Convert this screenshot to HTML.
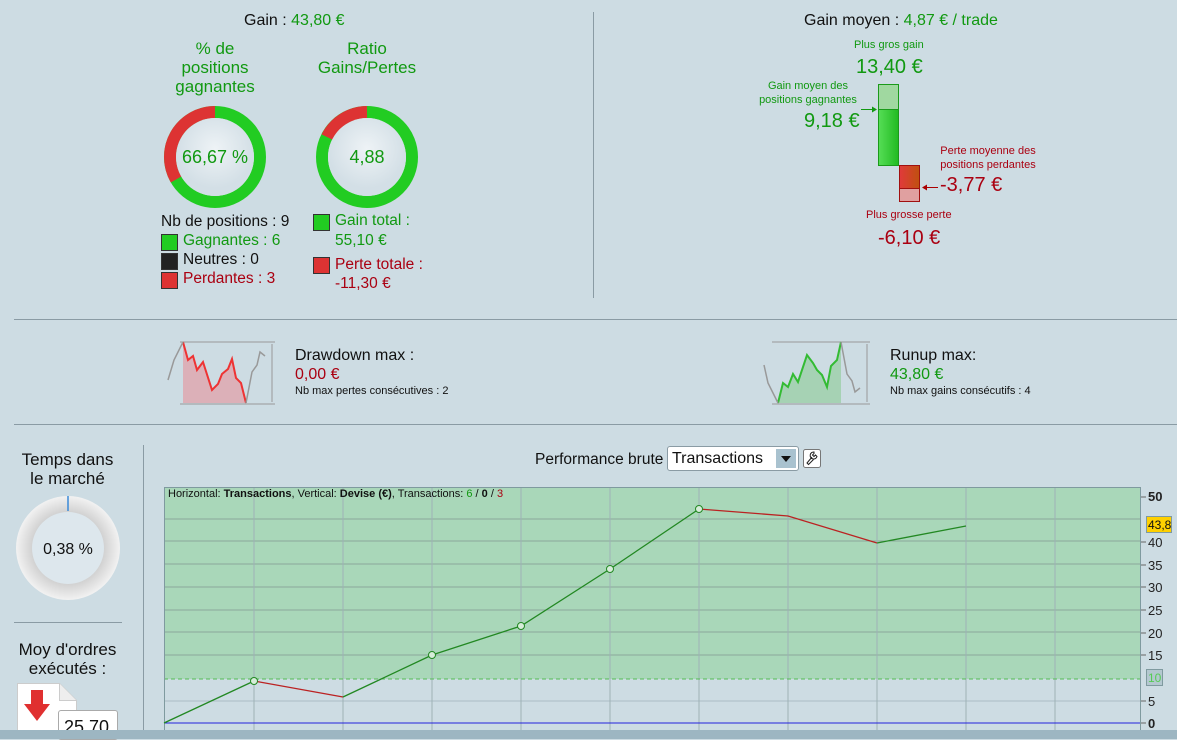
<!DOCTYPE html>
<html><head><meta charset="utf-8"><style>
body{margin:0;width:1177px;height:739px;background:#cddce3;font-family:"Liberation Sans",sans-serif;position:relative;overflow:hidden;color:#111}
.a{position:absolute;white-space:nowrap}
.g{color:#119911}.r{color:#aa0011}
.c{text-align:center}
.sq{position:absolute;width:15px;height:15px;border:1px solid #333}
</style></head><body>
<div class="a" style="left:593px;top:12px;width:1px;height:286px;background:#8a9ba4"></div>
<div class="a" style="left:14px;top:319px;width:1163px;height:1px;background:#8a9ba4"></div>
<div class="a" style="left:14px;top:424px;width:1163px;height:1px;background:#8a9ba4"></div>
<div class="a" style="left:143px;top:445px;width:1px;height:290px;background:#8a9ba4"></div>
<div class="a" style="left:14px;top:622px;width:108px;height:1px;background:#8a9ba4"></div>

<div class="a" style="left:244px;top:12px;font-size:16px">Gain : <span class="g">43,80 €</span></div>
<div class="a c g" style="left:150px;top:39px;width:130px;font-size:17px;line-height:19px">% de<br>positions<br>gagnantes</div>
<div class="a c g" style="left:298px;top:39px;width:138px;font-size:17px;line-height:19px">Ratio<br>Gains/Pertes</div>

<svg class="a" style="left:160px;top:102px" width="110" height="110">
<defs><radialGradient id="in" cx="50%" cy="40%"><stop offset="0" stop-color="#eef3f6"/><stop offset="1" stop-color="#d3dfe6"/></radialGradient></defs>
<circle cx="55" cy="55" r="45" fill="none" stroke="#22cc22" stroke-width="12"/>
<path d="M55 10 A45 45 0 0 0 16 77.5" fill="none" stroke="#dd3333" stroke-width="12"/>
<circle cx="55" cy="55" r="39" fill="url(#in)"/>
<text x="55" y="61" text-anchor="middle" font-size="18" fill="#119911" font-family="Liberation Sans">66,67 %</text>
</svg>
<svg class="a" style="left:312px;top:102px" width="110" height="110">
<circle cx="55" cy="55" r="45" fill="none" stroke="#22cc22" stroke-width="12"/>
<path d="M55 10 A45 45 0 0 0 15 35" fill="none" stroke="#dd3333" stroke-width="12"/>
<circle cx="55" cy="55" r="39" fill="url(#in)"/>
<text x="55" y="61" text-anchor="middle" font-size="18" fill="#119911" font-family="Liberation Sans">4,88</text>
</svg>

<div class="a" style="left:161px;top:213px;font-size:15.5px">Nb de positions : 9</div>
<div class="sq" style="left:161px;top:234px;background:#2c2"></div><div class="a g" style="left:183px;top:232px;font-size:15.5px">Gagnantes : 6</div>
<div class="sq" style="left:161px;top:253px;background:#222"></div><div class="a" style="left:183px;top:251px;font-size:15.5px">Neutres : 0</div>
<div class="sq" style="left:161px;top:272px;background:#d33"></div><div class="a r" style="left:183px;top:270px;font-size:15.5px">Perdantes : 3</div>
<div class="sq" style="left:313px;top:214px;background:#2c2"></div><div class="a g" style="left:335px;top:212px;font-size:15.5px">Gain total :</div>
<div class="a g" style="left:335px;top:232px;font-size:15.5px">55,10 €</div>
<div class="sq" style="left:313px;top:257px;background:#d33"></div><div class="a r" style="left:335px;top:256px;font-size:15.5px">Perte totale :</div>
<div class="a r" style="left:335px;top:275px;font-size:15.5px">-11,30 €</div>

<div class="a" style="left:804px;top:12px;font-size:16px">Gain moyen : <span class="g">4,87 € / trade</span></div>
<div class="a g" style="left:854px;top:39px;font-size:11px">Plus gros gain</div>
<div class="a g" style="left:856px;top:56px;font-size:20px">13,40 €</div>
<div class="a g c" style="left:755px;top:79px;width:106px;font-size:11px;line-height:14px">Gain moyen des<br>positions gagnantes</div>
<div class="a g" style="left:804px;top:110px;font-size:20px">9,18 €</div>
<svg class="a" style="left:860px;top:105px" width="20" height="10"><path d="M1 4.5h15" stroke="#119911"/><path d="M12 1.5l5 3-5 3z" fill="#119911"/></svg>
<div class="a" style="left:878px;top:84px;width:19px;height:24px;background:#a0d8a0;border:1px solid #1a9a1a"></div>
<div class="a" style="left:878px;top:109px;width:19px;height:55px;background:linear-gradient(90deg,#55dd55,#22bb22);border:1px solid #1a9a1a"></div>
<div class="a" style="left:899px;top:165px;width:19px;height:22px;background:linear-gradient(90deg,#e03a3a,#c05010);border:1px solid #a01010"></div>
<div class="a" style="left:899px;top:188px;width:19px;height:12px;background:#e0a0a0;border:1px solid #a01010"></div>
<svg class="a" style="left:919px;top:183px" width="20" height="10"><path d="M4 4.5h15" stroke="#a00"/><path d="M8 1.5l-5 3 5 3z" fill="#a00"/></svg>
<div class="a r c" style="left:940px;top:144px;width:96px;font-size:11px;line-height:14px">Perte moyenne des<br>positions perdantes</div>
<div class="a r" style="left:940px;top:174px;font-size:20px">-3,77 €</div>
<div class="a r" style="left:866px;top:209px;font-size:11px">Plus grosse perte</div>
<div class="a r" style="left:878px;top:227px;font-size:20px">-6,10 €</div>

<svg class="a" style="left:160px;top:330px" width="120" height="85">
<line x1="20" y1="12" x2="115" y2="12" stroke="#999"/><line x1="20" y1="74" x2="115" y2="74" stroke="#999"/>
<line x1="112" y1="14" x2="112" y2="72" stroke="#999"/>
<path d="M23 12 L28 30 L33 26 L37 40 L43 32 L52 60 L58 54 L62 44 L68 39 L72 29 L76 48 L81 53 L86 73 L23 73Z" fill="#dcb0b8"/>
<polyline points="23,12 28,30 33,26 37,40 43,32 52,60 58,54 62,44 68,39 72,29 76,48 81,53 86,73" fill="none" stroke="#e33" stroke-width="2"/>
<polyline points="8,50 14,30 23,12" fill="none" stroke="#999" stroke-width="1.5"/>
<polyline points="86,73 92,42 97,35 100,22 105,26" fill="none" stroke="#999" stroke-width="1.5"/>
</svg>
<div class="a" style="left:295px;top:347px;font-size:16px">Drawdown max :</div>
<div class="a r" style="left:295px;top:366px;font-size:16px">0,00 €</div>
<div class="a" style="left:295px;top:385px;font-size:11px">Nb max pertes consécutives : 2</div>

<svg class="a" style="left:760px;top:330px" width="120" height="85">
<line x1="12" y1="12" x2="110" y2="12" stroke="#999"/><line x1="12" y1="74" x2="110" y2="74" stroke="#999"/>
<line x1="107" y1="14" x2="107" y2="72" stroke="#999"/>
<path d="M18 73 L23 53 L28 57 L33 44 L38 52 L47 25 L53 33 L57 40 L62 45 L67 57 L71 36 L77 30 L81 12 L81 73Z" fill="#a6d2b4"/>
<polyline points="18,73 23,53 28,57 33,44 38,52 47,25 53,33 57,40 62,45 67,57 71,36 77,30 81,12" fill="none" stroke="#3b3" stroke-width="2"/>
<polyline points="4,35 8,53 18,73" fill="none" stroke="#999" stroke-width="1.5"/>
<polyline points="81,12 87,44 92,51 95,62 100,58" fill="none" stroke="#999" stroke-width="1.5"/>
</svg>
<div class="a" style="left:890px;top:347px;font-size:16px">Runup max:</div>
<div class="a g" style="left:890px;top:366px;font-size:16px">43,80 €</div>
<div class="a" style="left:890px;top:385px;font-size:11px">Nb max gains consécutifs : 4</div>

<div class="a c" style="left:8px;top:450px;width:119px;font-size:17px;line-height:19px">Temps dans<br>le marché</div>
<svg class="a" style="left:15px;top:495px" width="106" height="106">
<defs><radialGradient id="gr" cx="50%" cy="50%"><stop offset="0.6" stop-color="#c8c8c8"/><stop offset="1" stop-color="#f2f2f2"/></radialGradient></defs>
<circle cx="53" cy="53" r="52" fill="url(#gr)"/>
<circle cx="53" cy="53" r="36" fill="#dde7ed"/>
<line x1="53" y1="1" x2="53" y2="16" stroke="#3a8ad8" stroke-width="1.5"/>
<text x="53" y="59" text-anchor="middle" font-size="16" font-family="Liberation Sans" fill="#111">0,38 %</text>
</svg>
<div class="a c" style="left:8px;top:640px;width:119px;font-size:17px;line-height:19px">Moy d'ordres<br>exécutés :</div>
<svg class="a" style="left:17px;top:683px" width="70" height="56"><path d="M0.5 0.5h42l17 17v40h-59z" fill="#fff" stroke="#ccc"/><path d="M42.5 0.5v17h17" fill="#eee" stroke="#ccc"/></svg>
<svg class="a" style="left:24px;top:690px" width="28" height="34"><path d="M7 0h12v14h7L13 31 0 14h7z" fill="#e03030"/></svg>
<div class="a" style="left:58px;top:710px;width:60px;height:30px;background:#fff;border:1px solid #aaa;border-radius:3px;font-size:18px;padding:6px 0 0 5px;box-sizing:border-box">25,70</div>

<div class="a" style="left:535px;top:451px;font-size:15.5px">Performance brute</div>
<div class="a" style="left:667px;top:446px;width:132px;height:25px;background:#fff;border:1px solid #8a9ba4;border-radius:3px;box-sizing:border-box;font-size:16px;padding:3px 0 0 4px">Transactions
<div style="position:absolute;right:2px;top:2px;width:20px;height:19px;background:#a9c2cf"><svg width="20" height="19"><path d="M5 7h10l-5 6z" fill="#111"/></svg></div></div>
<svg class="a" style="left:803px;top:449px" width="18" height="19"><rect x="0.5" y="0.5" width="17" height="18" rx="2" fill="#fff" stroke="#777"/><path d="M11 3a3.5 3.5 0 1 0 3 4.5l-1.5-1.5-1.5 1.5-1.5-1.5 1.5-1.5zM9 8l-5 6 1.5 1.5 5-5" fill="none" stroke="#222"/></svg>

<svg class="a" style="left:0;top:0" width="1177" height="739">
<rect x="164" y="487" width="976" height="192" fill="#a9d7b9"/>
<g stroke="#8aa79a" stroke-width="1">
<line x1="164" y1="519" x2="1140" y2="519"/><line x1="164" y1="541" x2="1140" y2="541"/><line x1="164" y1="564" x2="1140" y2="564"/><line x1="164" y1="587" x2="1140" y2="587"/><line x1="164" y1="610" x2="1140" y2="610"/><line x1="164" y1="632" x2="1140" y2="632"/><line x1="164" y1="655" x2="1140" y2="655"/><line x1="164" y1="701" x2="1140" y2="701" stroke="#aabbc4"/>
</g>
<g stroke="#9fb2b6"><line x1="254" y1="487" x2="254" y2="730"/><line x1="343" y1="487" x2="343" y2="730"/><line x1="432" y1="487" x2="432" y2="730"/><line x1="521" y1="487" x2="521" y2="730"/><line x1="610" y1="487" x2="610" y2="730"/><line x1="699" y1="487" x2="699" y2="730"/><line x1="788" y1="487" x2="788" y2="730"/><line x1="877" y1="487" x2="877" y2="730"/><line x1="966" y1="487" x2="966" y2="730"/><line x1="1055" y1="487" x2="1055" y2="730"/></g>
<line x1="164" y1="679" x2="1140" y2="679" stroke="#55bb55" stroke-dasharray="4,3"/>
<line x1="164" y1="723" x2="1140" y2="723" stroke="#2222dd"/>
<rect x="164.5" y="487.5" width="976" height="250" fill="none" stroke="#7f9a9f"/>
<g fill="none" stroke-width="1.3">
<polyline points="164,723 254,681" stroke="#228822"/><polyline points="254,681 343,697" stroke="#bb2222"/>
<polyline points="343,697 432,655 521,626 610,569 699,509" stroke="#228822"/>
<polyline points="699,509 788,516 877,543" stroke="#bb2222"/><polyline points="877,543 966,526" stroke="#228822"/>
</g>
<g fill="#d6ecd9" stroke="#228822"><circle cx="254" cy="681" r="3.5"/><circle cx="432" cy="655" r="3.5"/><circle cx="521" cy="626" r="3.5"/><circle cx="610" cy="569" r="3.5"/><circle cx="699" cy="509" r="3.5"/></g>
<g font-family="Liberation Sans" font-size="13" fill="#222" stroke="none">
<text x="1148" y="501" font-weight="bold">50</text><text x="1148" y="547">40</text><text x="1148" y="570">35</text><text x="1148" y="592">30</text><text x="1148" y="615">25</text><text x="1148" y="638">20</text><text x="1148" y="660">15</text><text x="1148" y="706">5</text><text x="1148" y="728" font-weight="bold">0</text>
</g>
<g stroke="#666"><line x1="1141" y1="497" x2="1146" y2="497"/><line x1="1141" y1="542" x2="1146" y2="542"/><line x1="1141" y1="565" x2="1146" y2="565"/><line x1="1141" y1="587" x2="1146" y2="587"/><line x1="1141" y1="610" x2="1146" y2="610"/><line x1="1141" y1="633" x2="1146" y2="633"/><line x1="1141" y1="655" x2="1146" y2="655"/><line x1="1141" y1="701" x2="1146" y2="701"/><line x1="1141" y1="723" x2="1146" y2="723"/></g>
<rect x="1146.5" y="516.5" width="25" height="16" fill="#ffd000" stroke="#7f9a9f"/>
<text x="1148" y="529" font-family="Liberation Sans" font-size="12" fill="#111">43,8</text>
<rect x="1146.5" y="669.5" width="16" height="16" fill="#b4c8d0" stroke="#7f9a9f"/>
<text x="1148" y="682" font-family="Liberation Sans" font-size="12" fill="#55cc55">10</text>
</svg>
<div class="a" style="left:168px;top:488px;font-size:11px">Horizontal: <b>Transactions</b>, Vertical: <b>Devise (€)</b>, Transactions: <span class="g">6</span> / <b>0</b> / <span class="r">3</span></div>
<div class="a" style="left:0;top:730px;width:1177px;height:9px;background:#9db6c2"></div>
</body></html>
